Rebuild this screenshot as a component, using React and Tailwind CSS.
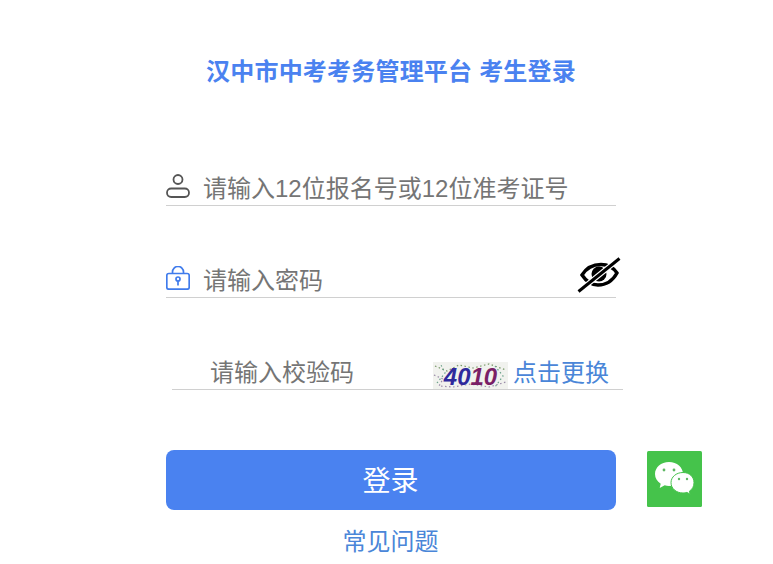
const font = { fontFamily: '"Liberation Sans", "Noto Sans CJK SC", sans-serif' }

const UserIcon = () => (
  <svg width="24" height="24" viewBox="0 0 24 24" fill="none" stroke="#555" strokeWidth="1.8" className="mb-[7px] shrink-0">
    <circle cx="12" cy="5.500" r="4.500" />
    <rect x="1" y="14.500" width="22" height="8.500" rx="4.200" />
  </svg>
)

const LockIcon = () => (
  <svg width="24" height="24" viewBox="0 0 24 24" fill="none" stroke="#3f7bec" strokeWidth="1.7" className="mb-[7px] shrink-0">
    <path d="M6.500 7.500V6a5.500 5.500 0 0 1 11 0v1.500" />
    <rect x="0.800" y="7.500" width="22.400" height="15.700" rx="2" />
    <circle cx="12" cy="13" r="2" />
    <path d="M12 15v4.500" />
  </svg>
)

const EyeOffIcon = () => (
  <svg width="44" height="36" viewBox="0 0 44 36" fill="none" stroke="#000" className="mb-[4px] ml-auto mr-[-5px] shrink-0">
    <path d="M5 18C10 10 17 7.500 24 7.500S36 10 40 16C35 25 28 28 21 28S9 24 5 18Z" strokeWidth="3.400" />
    <circle cx="22" cy="17" r="7.500" fill="#000" stroke="none" />
    <path d="M1.500 34.500 42.500 1.500" stroke="#fff" strokeWidth="5.500" />
    <path d="M1.500 34.500 42.500 1.500" strokeWidth="3" />
  </svg>
)

const Captcha = () => (
  <div className="relative flex h-[27px] w-[75px] shrink-0 items-center justify-center overflow-hidden bg-[#f1f2ee] pt-[2px]">
    <svg width="75" height="27" viewBox="0 0 75 27" className="absolute inset-0">
      <g fill="none" strokeWidth="1.200" strokeDasharray="1.500 2.500">
        <path d="M2 4 14 9 26 3 40 6 56 2 73 8" stroke="#7a9a6a" />
        <path d="M1 13 10 17 6 24 20 25 38 22 56 25 73 20" stroke="#9a8aa8" />
        <path d="M4 21 12 11 8 3M62 4 70 14 62 25" stroke="#6aa08a" />
      </g>
    </svg>
    <span className="relative text-[24px] font-bold italic leading-none" style={{ fontFamily: '"Liberation Sans", sans-serif' }}>
      <span className="text-[#2f2a9c]">40</span>
      <span className="text-[#7a1f66]">10</span>
    </span>
  </div>
)

const WechatIcon = () => (
  <svg width="55" height="56" viewBox="0 0 55 56" className="mt-px shrink-0">
    <rect width="55" height="56" rx="1.500" fill="#45c34b" />
    <path d="M22 11C14 11 8 16.500 8 23c0 4 2.200 7.500 5.700 9.700l-1 4.300 5-2.700c1.400 .4 2.800 .6 4.300 .6 8 0 14-5.400 14-11.900S30 11 22 11Z" fill="#fff" />
    <path d="M36 21.500c-6.800 0-12 4.500-12 10.200S29.200 42 36 42c1.400 0 2.700-.2 3.900-.6l3.300 1.800-.8-3c2.900-1.900 4.600-4.800 4.600-8.500C47 26 42.800 21.500 36 21.500Z" fill="#fff" stroke="#45c34b" strokeWidth="1" />
    <circle cx="17" cy="19" r="1.400" fill="#5fb864" />
    <circle cx="27" cy="19" r="1.400" fill="#5fb864" />
    <circle cx="32" cy="28" r="1.200" fill="#5fb864" />
    <circle cx="40" cy="28" r="1.200" fill="#5fb864" />
  </svg>
)

const App = () => {
  return (
    <div className="flex h-[564px] w-full flex-col items-start overflow-hidden bg-white pl-[166px]" style={font}>
      <h1 className="w-[450px] pt-[55px] text-center text-[24px] font-bold leading-[34px] tracking-[0.2px] text-[#4a82f0]">
        汉中市中考考务管理平台 考生登录
      </h1>

      <div className="mt-[77px] flex h-[40px] w-[450px] items-end border-b border-[#d0d0d0] text-[24px] leading-[32px] text-[#757575]">
        <UserIcon />
        <span className="ml-[13px]">请输入12位报名号或12位准考证号</span>
      </div>

      <div className="mt-[52px] flex h-[40px] w-[450px] items-end border-b border-[#d0d0d0] text-[24px] leading-[32px] text-[#757575]">
        <LockIcon />
        <span className="ml-[13px]">请输入密码</span>
        <EyeOffIcon />
      </div>

      <div className="ml-[6px] mt-[52px] flex h-[40px] w-[451px] items-end border-b border-[#d0d0d0] pl-[38px] text-[24px] leading-[32px] text-[#757575]">
        <span>请输入校验码</span>
        <div className="ml-[79px] flex items-end gap-[5px]">
          <Captcha />
          <span className="text-[#4a86d8]">点击更换</span>
        </div>
      </div>

      <div className="mt-[60px] flex items-start gap-[31px]">
        <button className="h-[60px] w-[450px] shrink-0 rounded-lg bg-[#4a82f0] pr-[1px] pt-[3px] text-[28px] text-white">
          登录
        </button>
        <WechatIcon />
      </div>

      <div className="mt-[14px] w-[450px] pr-[1px] text-center text-[24px] leading-[36px] text-[#4a86d8]">常见问题</div>
    </div>
  )
}

export default App
